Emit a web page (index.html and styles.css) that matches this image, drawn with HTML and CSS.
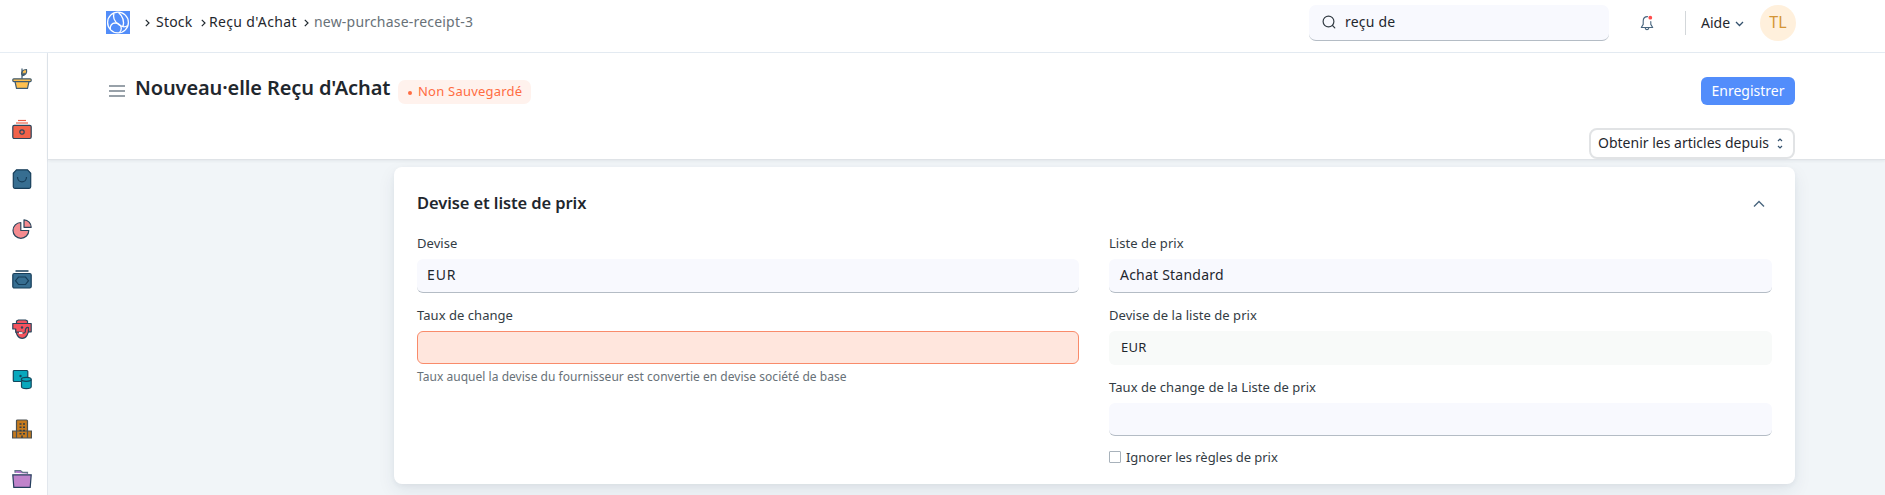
FILE: index.html
```html
<!DOCTYPE html>
<html lang="fr">
<head>
<meta charset="utf-8">
<title>Nouveau·elle Reçu d'Achat</title>
<link rel="stylesheet" href="styles.css">
</head>
<body>
<header class="navbar">
  <nav class="crumbs">
    <svg class="logo" width="24" height="23" viewBox="0 0 24 23" fill="none" stroke="#fff" stroke-width="1.300"><rect width="24" height="23" fill="#528df9" stroke="none"/><circle cx="12" cy="11.500" r="10.400"/><path d="M4.300 18.200C3.800 14.500 6 12 9.300 12c3.600 0 6 2.500 6 5.500 0 2-1 3.500-2.300 4.300"/><path d="M8 2.200c-1.500 4.500 1 8.500 4.500 11.300 3 2.400 6.500 3 9.300 1M12.500 1.500c4 3.500 5.800 9 4.500 14.200"/></svg>
    <svg class="sep first" width="5" height="8" viewBox="0 0 5 8"><path d="M.8.8 4 4 .8 7.200"/></svg>
    <a class="crumb stock">Stock</a>
    <svg class="sep" width="5" height="8" viewBox="0 0 5 8"><path d="M.8.8 4 4 .8 7.200"/></svg>
    <a class="crumb doctype">Reçu d'Achat</a>
    <svg class="sep last" width="5" height="8" viewBox="0 0 5 8"><path d="M.8.8 4 4 .8 7.200"/></svg>
    <span class="crumb current">new-purchase-receipt-3</span>
  </nav>
  <div class="tools">
    <div class="search">
      <svg width="14" height="14" viewBox="0 0 14 14" fill="none" stroke="#333c44" stroke-width="1.200" stroke-linecap="round"><circle cx="6.500" cy="6.500" r="5.400"/><path d="m10.500 10.500 2.300 2.300"/></svg>
      <span>reçu de</span>
    </div>
    <svg class="bell" width="14" height="16" viewBox="0 0 14 16" fill="none" stroke="#48657e" stroke-width="1.100" stroke-linejoin="round" stroke-linecap="round"><path d="M7.500 1.600C4.700 1.600 3.200 3.600 3.200 6v3.400L1.300 12.500h11.400l-1.900-3.100V6.500M5.200 12.800c.2 1.200.9 1.800 1.800 1.800s1.600-.6 1.800-1.800"/><circle cx="10.300" cy="2.700" r="1.900" fill="#ff4d4d" stroke="none"/></svg>
    <span class="rule"></span>
    <span class="help-menu">Aide</span>
    <svg class="help-arrow" width="9" height="6" viewBox="0 0 9 6"><path d="m1 1 3.500 3.500L8 1"/></svg>
    <span class="avatar">TL</span>
  </div>
</header>
<div class="shell">
  <aside class="sidebar">
    <svg viewBox="0 0 20 20"><g fill="#ffc04f" stroke="#3f5b70" stroke-width="1.200"><path d="M3 12.500h14l-1.500 6.900H4.500z"/><rect x=".8" y="9.800" width="18.400" height="2.800" rx="1"/><path d="M10 6C9 2.500 11 .5 14.500.5c.6 3-1 5.500-4.500 6.300"/><path d="M10-.5v10.300M10 7l2.500-3" fill="none"/></g></svg>
    <svg viewBox="0 0 20 20"><path d="M6 1.500h8" stroke="#ec5b45" stroke-width="1.200"/><path d="M4 4h12" stroke="#f3a294" stroke-width="2"/><g fill="#f0624a" stroke="#29465c" stroke-width="1.200"><rect x=".8" y="6.300" width="18.400" height="13.200" rx="1.500"/><circle cx="10" cy="13" r="2.200"/></g></svg>
    <svg viewBox="0 0 20 20"><g fill="#376e91" stroke="#173e5a" stroke-width="1.200"><path d="M4.500.8h11l3.200 3.500v13.500q0 1.500-1.500 1.500H2.800q-1.500 0-1.500-1.500V4.300z"/><path d="M5.500 8c0 6.500 9 6.500 9 0" fill="none"/></g></svg>
    <svg viewBox="0 0 20 20"><g fill="#f48b90" stroke="#29465c" stroke-width="1.200" stroke-linejoin="round"><path d="M8.800 3.500v8h8a7.900 7.900 0 1 1-8-8z"/><path d="M12 .8a7.500 7.500 0 0 1 7.200 7.500H12z"/></g></svg>
    <svg viewBox="0 0 20 20"><g fill="#376e91" stroke="#173e5a" stroke-width="1.200"><path d="M3.500 2h13" stroke-width="1.500"/><rect x=".8" y="4.500" width="18.400" height="14.500" rx="1.500"/><path d="M6.500 8h7l3 3.700-3 3.800h-7l-3-3.800z"/></g></svg>
    <svg viewBox="0 0 20 20"><g fill="#f4535e" stroke="#29465c" stroke-width="1.200" stroke-linejoin="round"><path d="M4.500 4.500V2l2-1h7l2 1v2.500M3.500 9c0 6 2.700 10.300 6.700 10.300S16.800 15 16.800 9"/><path d="M.8 4.500h18.400v8.300h-2.700V8.500c-2.500-.5-3.500 2-3.200 4.500-1 1.500-2.500 1.500-4 .2H3.800V10H.8z"/></g><path d="M7 14h3.500" stroke="#fff" stroke-width="1.600"/><circle cx="10" cy="8.500" r="1.200" fill="#29465c"/></svg>
    <svg viewBox="0 0 20 20"><g fill="#08a8bd" stroke="#12485e" stroke-width="1.200"><rect x="1.300" y="1.500" width="14.500" height="11" rx="1"/><path d="M9.500 10.500v7c0 2.800 9.700 2.800 9.700 0v-7"/><ellipse cx="14.300" cy="10.300" rx="4.900" ry="2"/></g><circle cx="8.500" cy="7" r="1.200" fill="#12485e"/></svg>
    <svg viewBox="0 0 20 20"><g fill="#c67a1d" stroke="#4b5152" stroke-width="1.200"><path d="M.6 12h18.800v7H.6zM4.500 19V2q0-1 1-1h9q1 0 1 1v17z"/></g><path d="M7.500 5h2m1.500 0h2m-5.500 3.300h2m1.500 0h2m-5.500 3.300h2m1.500 0h2m-5.500 3.200h2m1.500 0h2M10 19v-2.500" stroke="#333f45" stroke-width="1.500"/></svg>
    <svg viewBox="0 0 20 20"><path d="M3 3.800V1.600h5.500l2 1.700h5v1.500" fill="#b978cf" stroke="#65768a" stroke-width="1.200"/><path d="M.8 5.800h18.400l-1 12.500H1.800z" fill="#c083cb" stroke="#243e5d" stroke-width="1.200"/></svg>
  </aside>
  <main class="content">
    <div class="page-head">
      <div class="title-row">
        <span class="burger"><i></i><i></i><i></i></span>
        <h1>Nouveau·elle Reçu d'Achat</h1>
        <span class="badge"><i></i><span>Non Sauvegardé</span></span>
        <button class="save">Enregistrer</button>
      </div>
      <button class="get-items"><span>Obtenir les articles depuis</span><svg width="6" height="11" viewBox="0 0 6 11"><path d="m1 3 2-2 2 2M1 8l2 2 2-2"/></svg></button>
    </div>
    <section class="card">
      <div class="card-head">
        <h2>Devise et liste de prix</h2>
        <svg width="12" height="8" viewBox="0 0 12 8"><path d="m1 6.500 5-5 5 5"/></svg>
      </div>
      <div class="columns">
        <div class="column">
          <label>Devise</label>
          <div class="field eur">EUR</div>
          <label>Taux de change</label>
          <div class="field error"></div>
          <p class="hint">Taux auquel la devise du fournisseur est convertie en devise société de base</p>
        </div>
        <div class="column">
          <label>Liste de prix</label>
          <div class="field">Achat Standard</div>
          <label>Devise de la liste de prix</label>
          <div class="field readonly">EUR</div>
          <label>Taux de change de la Liste de prix</label>
          <div class="field short"></div>
          <div class="check"><span class="box"></span><span>Ignorer les règles de prix</span></div>
        </div>
      </div>
    </section>
  </main>
</div>
</body>
</html>
```
FILE: styles.css
```css
* { box-sizing: border-box; }
body {
  margin: 0;
  height: 495px;
  overflow: hidden;
  background: #f1f5f8;
  color: #1f272e;
  font: 14px/20px "Noto Sans", sans-serif;
  letter-spacing: .22px;
}
h1, h2, p { margin: 0; }
button { font: inherit; letter-spacing: 0; color: inherit; }
svg { flex: none; display: block; }

.navbar {
  display: flex;
  justify-content: space-between;
  align-items: flex-start;
  height: 53px;
  padding: 5px 89px 0 106px;
  background: #fff;
  border-bottom: 1px solid #e6edf4;
}
.crumbs { display: flex; align-items: center; height: 34px; }
.sep { margin: 2px 3px 0 9px; fill: none; stroke: #1f272e; stroke-width: 1.2; }
.sep.first { margin: 2px 6px 0 15px; }
.stock { width: 36px; }
.doctype { width: 86px; letter-spacing: .35px; white-space: nowrap; }
.current { margin-left: 2px; letter-spacing: .2px; color: #687178; }
.tools { display: flex; align-items: center; height: 36px; }
.search {
  display: flex;
  align-items: center;
  gap: 9px;
  width: 300px;
  height: 36px;
  padding: 0 0 1px 13px;
  background: #f8f9fe;
  border-bottom: 1px solid #b4bcc5;
  border-radius: 7px;
}
.bell { margin-left: 31px; }
.rule { width: 1px; height: 24px; margin-left: 31px; background: #d3d7da; }
.help-menu { width: 29px; margin-left: 15px; letter-spacing: 0; }
.help-arrow { margin: 1px 16px 0 5px; fill: none; stroke: #34516d; stroke-width: 1.3; }
.avatar {
  width: 36px;
  height: 36px;
  border-radius: 50%;
  background: #fff0dc;
  color: #d49536;
  font-size: 16px;
  line-height: 35px;
  text-align: center;
}

.shell { display: flex; height: 442px; }
.sidebar {
  display: flex;
  flex: none;
  flex-direction: column;
  gap: 30px;
  width: 48px;
  padding: 16px 0 0 12px;
  background: #fff;
  border-right: 1px solid #e2e7ed;
}
.sidebar svg { width: 20px; height: 20px; fill: none; overflow: visible; }
.content { flex: 1; }
.page-head {
  display: flex;
  flex-direction: column;
  height: 107px;
  padding: 27px 90px 0 61px;
  background: #fff;
  border-bottom: 1px solid #dfe3e7;
  box-shadow: 0 1px 3px rgba(30, 45, 60, .07);
}
.title-row { display: flex; align-items: flex-start; }
.burger { display: flex; flex-direction: column; gap: 3px; width: 16px; padding-top: 5px; }
.burger i { height: 2px; background: #98a1a9; }
h1 { margin: -7px 0 0 10px; width: 263px; white-space: nowrap; font-size: 20px; font-weight: 600; line-height: 30px; letter-spacing: -.12px; }
.badge {
  display: flex;
  align-items: center;
  width: 133px;
  height: 24px;
  padding: 0 0 2px 10px;
  border-radius: 7px;
  background: #fff2ed;
  color: #ff6c42;
  font-size: 13px;
  white-space: nowrap;
}
.badge i { width: 4px; height: 4px; margin: 3px 6px 0 0; border-radius: 50%; background: #ff6c42; }
.save { width: 94px; height: 28px; margin: -3px 0 0 auto; padding: 0; border: 0; border-radius: 6px; background: #528dfb; color: #fff; }
.get-items {
  display: flex;
  align-items: center;
  align-self: flex-end;
  justify-content: space-between;
  width: 206px;
  height: 31px;
  margin: 23px 0 0;
  padding: 0 10px 1px 7px;
  border: 2px solid #e1e3e5;
  border-radius: 8px;
  background: #fff;
  white-space: nowrap;
}
.get-items svg { fill: none; stroke: #34516d; stroke-width: 1.2; }

.card {
  height: 317px;
  margin: 7px 90px 0 346px;
  padding: 23px 23px 0;
  border-radius: 8px;
  background: #fff;
  box-shadow: 0 7px 18px rgba(30, 50, 80, .08), 0 2px 5px rgba(30, 50, 80, .05);
}
.card-head { display: flex; align-items: center; justify-content: space-between; height: 28px; padding-right: 7px; }
.card-head svg { fill: none; stroke: #48657e; stroke-width: 1.4; }
h2 { margin-top: -2px; font-size: 16.5px; font-weight: 600; line-height: 26px; letter-spacing: -.1px; }
.columns { display: grid; grid-template-columns: 662px 663px; justify-content: space-between; margin-top: 15px; }
.column { display: flex; flex-direction: column; }
label { height: 26px; color: #333c44; font-size: 13px; line-height: 20px; letter-spacing: .04px; }
.field {
  height: 34px;
  margin-bottom: 12px;
  padding-left: 11px;
  border-bottom: 1px solid #b4bcc5;
  border-radius: 6px;
  background: #f8f9fe;
  line-height: 32px;
}
.field.eur { padding-left: 10px; letter-spacing: .9px; }
.field.error { height: 33px; margin-bottom: 7px; border: 1px solid #f98b6a; background: #ffe6dd; }
.field.readonly { padding-left: 12px; border-bottom: 0; background: #f8faf9; font-size: 13px; line-height: 33px; }
.field.short { height: 33px; margin-bottom: 13px; }
.hint { color: #687178; font-size: 12px; line-height: 12px; letter-spacing: .03px; }
.check { display: flex; align-items: center; gap: 5px; height: 16px; color: #333c44; font-size: 13px; letter-spacing: -.04px; }
.box { width: 12px; height: 12px; border: 1px solid #a8b2bb; border-radius: 1px; }
```
